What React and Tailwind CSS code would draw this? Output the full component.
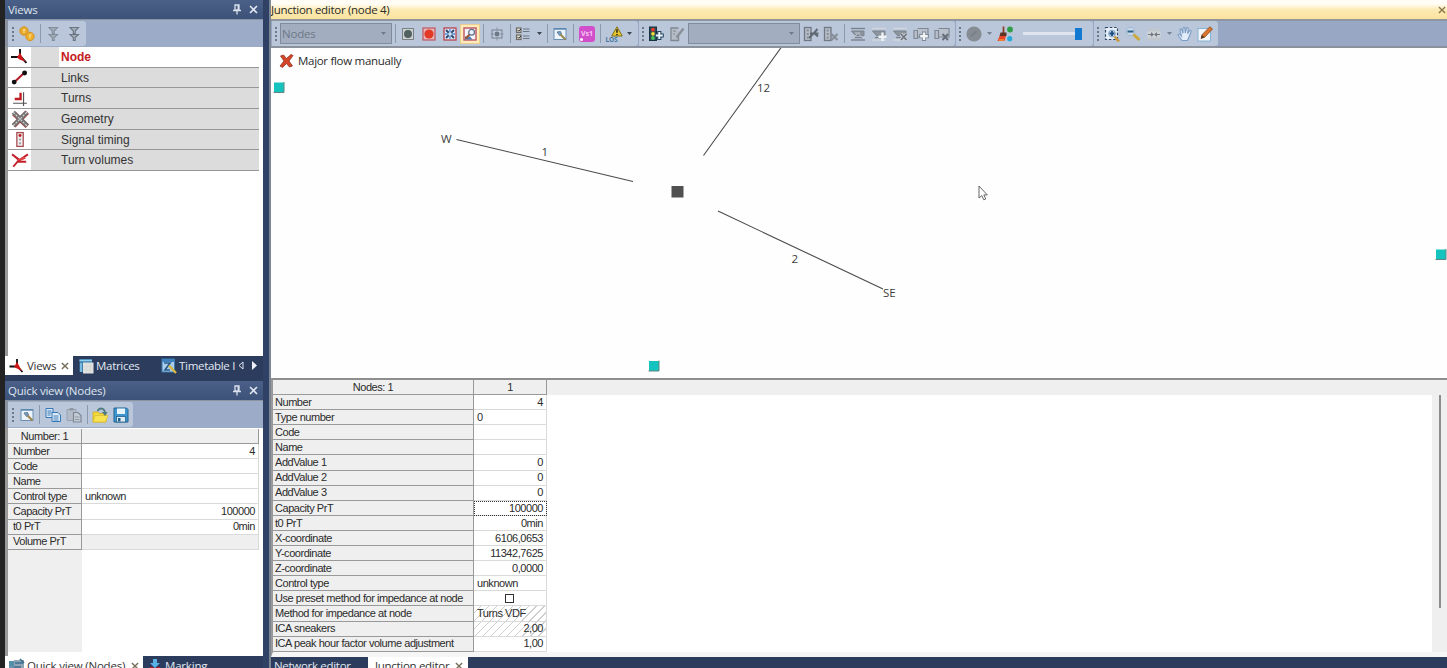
import clsx from 'clsx'

const VIEWS = [
  { label: 'Node', icon: NodeIcon, active: true },
  { label: 'Links', icon: LinkIcon },
  { label: 'Turns', icon: TurnIcon },
  { label: 'Geometry', icon: GeometryIcon },
  { label: 'Signal timing', icon: SignalIcon },
  { label: 'Turn volumes', icon: VolumeIcon },
]

const QUICK_ROWS = [
  { label: 'Number', value: '4' },
  { label: 'Code', value: '' },
  { label: 'Name', value: '' },
  { label: 'Control type', value: 'unknown', left: true },
  { label: 'Capacity PrT', value: '100000' },
  { label: 't0 PrT', value: '0min' },
  { label: 'Volume PrT', value: '', disabled: true },
]

const NODE_ROWS = [
  { label: 'Number', value: '4' },
  { label: 'Type number', value: '0', left: true },
  { label: 'Code', value: '' },
  { label: 'Name', value: '' },
  { label: 'AddValue 1', value: '0' },
  { label: 'AddValue 2', value: '0' },
  { label: 'AddValue 3', value: '0' },
  { label: 'Capacity PrT', value: '100000', focused: true },
  { label: 't0 PrT', value: '0min' },
  { label: 'X-coordinate', value: '6106,0653' },
  { label: 'Y-coordinate', value: '11342,7625' },
  { label: 'Z-coordinate', value: '0,0000' },
  { label: 'Control type', value: 'unknown', left: true },
  { label: 'Use preset method for impedance at node', checkbox: true },
  { label: 'Method for impedance at node', value: 'Turns VDF', left: true, hatched: true },
  { label: 'ICA sneakers', value: '2,00', hatched: true },
  { label: 'ICA peak hour factor volume adjustment', value: '1,00' },
]

function Svg({ size = 16, children, className }) {
  return (
    <svg width={size} height={size} viewBox="0 0 16 16" fill="none" className={clsx('shrink-0', className)}>
      {children}
    </svg>
  )
}

/* ---------- view list icons ---------- */

function NodeIcon() {
  return (
    <Svg size={17}>
      <path d="M0 8.500H9M8.500 1v7M9 8l5.500 6" stroke="#111" strokeWidth="1.8" />
      <path d="M8.500 4.500l3 5.500L14 13l-5.500-2-3-2z" fill="#d01818" />
    </Svg>
  )
}

function LinkIcon() {
  return (
    <Svg size={17}>
      <path d="M3 12.5L12.5 3.5" stroke="#b3202c" strokeWidth="2" />
      <circle cx="3" cy="12.3" r="2.3" fill="#111" />
      <circle cx="12.8" cy="3.8" r="2.3" fill="#111" />
    </Svg>
  )
}

function TurnIcon() {
  return (
    <Svg size={17}>
      <path d="M2 12.5h13M11.8 2v13" stroke="#555" strokeWidth="1.1" />
      <path d="M9 2.500v6H3.500" stroke="#c01c24" strokeWidth="2.2" />
    </Svg>
  )
}

function GeometryIcon() {
  return (
    <Svg size={18}>
      <path d="M2.5 3l12 11.500M14.500 2L2.500 14" stroke="#b04a4a" strokeWidth="4.4" />
      <path d="M2 2l12.5 12M14 2L2 14" stroke="#717171" strokeWidth="3.8" />
      <path d="M2 2l12 12M14 2L2 14" stroke="#d5d5d5" strokeWidth="1" strokeDasharray="2 1" />
    </Svg>
  )
}

function SignalIcon() {
  return (
    <Svg size={17}>
      <rect x="5.5" y="1.5" width="6" height="13" fill="#eee" stroke="#a84a50" strokeWidth="1.2" />
      <circle cx="8.5" cy="4.2" r="1.4" fill="#c01c24" />
      <circle cx="8.5" cy="8" r="1" fill="#999" />
      <circle cx="8.5" cy="11.6" r="1" fill="#999" />
    </Svg>
  )
}

function VolumeIcon() {
  return (
    <Svg size={18}>
      <path d="M1 3l6 5-5 6M1 3l6 4.500M7 8.500l8-5.500M5 9.500h8.500" stroke="#c4202b" strokeWidth="1.7" />
      <path d="M5 8l6-3 2.500 1.500-4 2z" fill="#d44" />
    </Svg>
  )
}

/* ---------- toolbar icons ---------- */

function CoinsIcon() {
  return (
    <Svg>
      <circle cx="5" cy="5" r="4.2" fill="#e9a92b" stroke="#d1942a" />
      <circle cx="11" cy="10.5" r="4.2" fill="#efae2c" stroke="#d1942a" />
      <path d="M4 4.500l2.500-1M10 9.500l2.500-1M5 3v4M11 8.500v4" stroke="#fbdc8a" strokeWidth="1.2" />
    </Svg>
  )
}

function FilterIcon({ dark }) {
  const stroke = dark ? '#6c7683' : '#848e9b'
  return (
    <Svg>
      <path d="M4 1.500h8.500L9.200 5v2.500H7.300V5z" fill="#a3adba" stroke={stroke} strokeWidth="1.1" />
      <path d="M4 8.500h8.500L9.200 11.500V14.500H7.300v-3z" fill="#a3adba" stroke={stroke} strokeWidth="1.1" />
    </Svg>
  )
}

function FramedNode({ color }) {
  return (
    <Svg>
      <rect x="2.5" y="2.5" width="11" height="11" fill="#c9d0cf" stroke="#7d8385" />
      <circle cx="8" cy="8" r="4" fill={color} />
    </Svg>
  )
}

function RedNode() {
  return (
    <Svg>
      <rect x="2" y="2" width="12" height="12" fill="#e5b5b8" stroke="#c05560" strokeWidth="1.2" />
      <circle cx="8" cy="8" r="4.6" fill="#e23a25" />
    </Svg>
  )
}

function CrossNode() {
  return (
    <Svg>
      <rect x="2" y="2" width="12" height="12" fill="#dfe8f6" stroke="#b8424f" strokeWidth="1.3" />
      <path d="M4 4l3 3M12 4L9 7M4 12l3-3M12 12L9 9" stroke="#2e4770" strokeWidth="1.9" />
      <path d="M8 3v3.500M8 9.500V13M3 8h3.500M9.500 8H13" stroke="#6fa2dd" strokeWidth="1.8" />
      <rect x="6.6" y="6.6" width="2.8" height="2.8" fill="#cfe1f6" />
    </Svg>
  )
}

function EditorNode() {
  return (
    <Svg>
      <rect x="2" y="2" width="12" height="12" fill="#f6f4f8" stroke="#bd5560" strokeWidth="1.4" />
      <path d="M3 10.500h5l2.500 3H3z" fill="#4b7cae" />
      <circle cx="9.600" cy="6.300" r="2.900" fill="#e9f1fb" stroke="#5b6f8e" strokeWidth="1.2" />
      <path d="M7.500 8.500L3.500 12.500" stroke="#a0522d" strokeWidth="1.8" />
    </Svg>
  )
}

function TargetIcon() {
  return (
    <Svg>
      <rect x="3" y="4" width="10" height="8" stroke="#78828f" />
      <path d="M8 1.500v13M1.500 8h13" stroke="#8a94a2" />
      <rect x="6" y="6" width="4" height="4" fill="#6f7886" />
    </Svg>
  )
}

function ListIcon() {
  return (
    <Svg>
      <rect x="1.5" y="2" width="4.5" height="4.5" fill="#e3ddd0" stroke="#6d6a68" strokeWidth="1.2" />
      <rect x="1.5" y="9" width="4.5" height="4.5" fill="#e3ddd0" stroke="#6d6a68" strokeWidth="1.2" />
      <path d="M2.500 4l1.200 1.200L6 3M2.500 11l1.200 1.200L6 10" stroke="#333" />
      <path d="M8 3h6.500M8 5.500h6.500M8 10h6.500M8 12.500h6.500" stroke="#6d7683" strokeWidth="1.1" />
    </Svg>
  )
}

function ZoomWindowIcon() {
  return (
    <Svg>
      <rect x="2" y="2.5" width="12" height="11" fill="#eef4fb" stroke="#6a8fb2" />
      <path d="M2 3h12" stroke="#5585b3" strokeWidth="1.4" />
      <path d="M5 6l3.500-.5 1 2.500-2 1.500z" fill="#7aa2c8" stroke="#4d6880" strokeWidth="0.800" />
      <path d="M8.500 8.500l5 5" stroke="#9c8a52" strokeWidth="2.2" />
    </Svg>
  )
}

function VissimBadge() {
  return (
    <div className="relative flex h-[16px] w-[16px] items-center justify-center rounded-[3px] bg-[#d24fcb]">
      <span className="text-[7px] leading-none font-bold text-[#f7c5f2]">Vs1</span>
      <span className="absolute bottom-[1px] left-[1px] h-[3px] w-[3px] rounded-full bg-white" />
    </div>
  )
}

function LosIcon() {
  return (
    <div className="relative flex h-[16px] w-[17px] items-end">
      <span className="text-[6.5px] leading-[5px] font-bold tracking-tight text-[#47779f]">LOS</span>
      <svg width="12" height="11" viewBox="0 0 12 11" className="absolute top-0 right-0">
        <path d="M6 0.8L11.300 10H0.700z" fill="#e8c72c" stroke="#7d701e" />
        <path d="M6 3.200v3.600M6 8v1.200" stroke="#222" strokeWidth="1.5" />
      </svg>
    </div>
  )
}

function SignalAddIcon() {
  return (
    <Svg>
      <rect x="1.5" y="1" width="7" height="13.5" fill="#2d4b55" stroke="#18333e" />
      <circle cx="5" cy="3.7" r="1.9" fill="#e43b2b" />
      <circle cx="5" cy="7.8" r="1.9" fill="#f2dc35" />
      <circle cx="5" cy="12" r="1.9" fill="#48c45a" />
      <path d="M11.300 5v9M6.800 9.500h9" stroke="#23435f" strokeWidth="4.200" />
      <path d="M11.300 6v7M7.800 9.500h7" stroke="#e9f5ff" strokeWidth="2" />
    </Svg>
  )
}

function SignalEditIcon() {
  return (
    <Svg>
      <path d="M9.500 2H2v12.500h7.500V9" fill="#b7bdc6" stroke="#7f8791" strokeWidth="1.3" />
      <path d="M4 5h3M4 8h2" stroke="#7f8791" />
      <path d="M14.500 2.500l-7 9" stroke="#8b9199" strokeWidth="2.6" />
    </Svg>
  )
}

function SignalGrayIcon({ cross }) {
  return (
    <Svg>
      <rect x="1.5" y="1.5" width="6.5" height="13" fill="#b6bdc7" stroke="#6f7884" strokeWidth="1.3" />
      <path d="M4.700 3.500v2M4.700 7v2M4.700 10.500v2" stroke="#858e99" strokeWidth="2" />
      {cross ? (
        <path d="M8.500 8l6 6M14.500 8l-6 6" stroke="#868d97" strokeWidth="2" />
      ) : (
        <path d="M6 12l6-6M7 7.500h8.500M14.500 3L11 7l4 3.500" stroke="#5f6873" strokeWidth="1.900" />
      )}
    </Svg>
  )
}

function LanesIcon({ variant }) {
  return (
    <Svg>
      <path d="M1 2.500h14" stroke={variant ? '#d2d6dc' : '#79828e'} strokeWidth="1.4" />
      <path d="M1 14h14" stroke={variant ? '#d2d6dc' : '#79828e'} strokeWidth="1.4" />
      <path d="M1.500 5h12.500v4.500H5.500z" fill="#8d949d" stroke="#79828e" />
      <path d="M4 11.500h9" stroke="#79828e" strokeWidth="1.5" />
      {variant === 'add' && <path d="M11.500 6.500v8.500M7.500 10.700h8" stroke="#f0f2f5" strokeWidth="2.400" />}
      {variant === 'remove' && (
        <>
          <path d="M9 8l5.500 6M14.500 8L9 14" stroke="#ccd1d8" strokeWidth="3.400" />
          <path d="M9 8l5.500 6M14.500 8L9 14" stroke="#6c747f" strokeWidth="1.700" />
        </>
      )}
      {!variant && <path d="M3 13l4-5M8.500 8l5.500 5M5 7h5" stroke="#c2c9d3" strokeWidth="1" />}
    </Svg>
  )
}

function CrosswalkIcon({ remove }) {
  return (
    <Svg>
      <path d="M1 4.500v8h3.500v-8zM4.500 2.500H15v8.500H4.500" fill="#b9c1cd" stroke="#7e8793" strokeWidth="1.2" />
      {remove ? (
        <path d="M8.500 8l5.500 6M14 8l-5.500 6" stroke="#666e79" strokeWidth="1.9" />
      ) : (
        <>
          <path d="M11 5.500v9.500M6.200 10.200h9.600" stroke="#7e8793" strokeWidth="4.200" />
          <path d="M11 6.500v7.500M7.200 10.200h7.600" stroke="#f1f3f6" strokeWidth="2.400" />
        </>
      )}
    </Svg>
  )
}

function GrayDot() {
  return (
    <Svg>
      <circle cx="8" cy="8" r="7.6" fill="#868c93" />
      <path d="M5 10.500l5.500-5.500" stroke="#798087" strokeWidth="2" />
    </Svg>
  )
}

function BrushIcon() {
  return (
    <Svg>
      <path d="M6.500 0.500v7" stroke="#8f4226" strokeWidth="1.800" />
      <path d="M3.500 6.500h6v3.500h-7z" fill="#5d3327" />
      <path d="M2.500 10h6.500l-1.500 5H0.500z" fill="#e9432a" />
      <path d="M2 14h5" stroke="#f7bd35" />
      <circle cx="13" cy="3.500" r="2.900" fill="#2f9c46" />
      <circle cx="12.700" cy="12.700" r="2.600" fill="#25a9d8" />
    </Svg>
  )
}

function ZoomRectIcon() {
  return (
    <Svg>
      <rect x="1.500" y="1.500" width="12" height="12" fill="#e6eef8" stroke="#2f4a66" strokeWidth="1.200" strokeDasharray="2.500 1.800" />
      <circle cx="8" cy="7.500" r="3.400" fill="#c4daf0" stroke="#85a4c4" />
      <path d="M8 5v5M5.500 7.500h5" stroke="#1d4b7c" strokeWidth="1.8" />
      <path d="M10.500 10.500l4.500 5" stroke="#c79a3f" strokeWidth="2.600" />
    </Svg>
  )
}

function ZoomOutIcon() {
  return (
    <Svg>
      <circle cx="5.500" cy="5.500" r="4.200" fill="#c5d8ec" stroke="#a1b7d0" />
      <path d="M2.500 5.500h6" stroke="#2b6287" strokeWidth="2" />
      <path d="M8.500 8.500l6 5.500" stroke="#cda83c" strokeWidth="3" />
    </Svg>
  )
}

function FitIcon() {
  return (
    <Svg>
      <path d="M2 2.500h12v12H2z" fill="#c2c7ce" />
      <path d="M1.500 5.500h13v6h-13z" fill="#d0d4d9" />
      <path d="M2 8.500h4.500M14 8.500H9.500M5 6.800l2 1.700-2 1.700M11 6.800L9 8.500l2 1.700" stroke="#6f7680" strokeWidth="1.200" />
    </Svg>
  )
}

function HandIcon() {
  return (
    <Svg>
      <path
        d="M5 14.5L1.2 9.3c-.6-1 .8-1.8 1.6-.9L4.5 10 3 4.3c-.2-1.3 1.4-1.6 1.8-.4L6 7.3V2.2c0-1.3 1.8-1.3 1.9 0L8.2 7l1.3-4.6c.4-1.2 2-.8 1.8.4l-.8 4.9 1.9-2.9c.8-1 2.100-.2 1.600.9L12 11l-1.500 3.500z"
        fill="#e3edf9"
        stroke="#7c9cc4"
        strokeWidth="1.1"
      />
    </Svg>
  )
}

function PencilIcon() {
  return (
    <Svg>
      <rect x="1" y="2.500" width="12.500" height="12.500" fill="#f3f7fb" stroke="#87b2d2" />
      <path d="M4 12.500l1-3.800L12.800 0.800l2.700 2.300L7.700 11.300z" fill="#d9752f" stroke="#8d4e22" strokeWidth="0.800" />
      <path d="M4 12.500l1-3.600 2.500 2.300z" fill="#4d3421" />
    </Svg>
  )
}

function CopyIcon({ muted }) {
  const stroke = muted ? '#939daa' : '#3477b5'
  const fill = muted ? '#bec6d0' : '#dceaf7'
  return (
    <Svg>
      <path d="M1 1.500h7v9H1z" fill={fill} stroke={stroke} />
      <path d="M2.500 4h4M2.500 6h4M2.500 8h3" stroke={stroke} />
      <path d="M7 5.500h6l2.500 2.500v6.500H7z" fill={fill} stroke={stroke} />
      <path d="M8.500 9h5M8.500 11h5M8.500 13h5" stroke={stroke} strokeWidth="0.9" />
    </Svg>
  )
}

function PasteIcon() {
  return (
    <Svg>
      <path d="M1 2.500h9v11H1z" fill="#b3bcc8" stroke="#98a2af" />
      <path d="M3.500 1h4v2.500h-4z" fill="#8d97a5" />
      <path d="M7.500 5.500h4.500l3 3v6.500H7.500z" fill="#c3cad3" stroke="#7d8794" strokeWidth="1.200" />
      <path d="M9 10h4.500M9 12.500h4.500" stroke="#929ba8" />
    </Svg>
  )
}

function OpenIcon() {
  return (
    <Svg>
      <path d="M1 5h5l1.500 1.500H14v8.500H1z" fill="#f2d83a" stroke="#d2b22b" />
      <path d="M1 15l2-6.500h13L13.500 15z" fill="#f7e352" stroke="#d9bb2e" strokeWidth="0.700" />
      <path d="M5.500 4c2-4 7-3 7.500 1.500" stroke="#4f7c80" strokeWidth="1.800" />
      <path d="M10 5h5.500L13 9z" fill="#4f7c80" />
    </Svg>
  )
}

function SaveIcon() {
  return (
    <Svg>
      <path d="M1 1h12.500L15 2.500V15H1z" fill="#3d96d0" stroke="#22628f" />
      <rect x="4" y="1.500" width="8" height="5.500" fill="#e8f4fc" />
      <rect x="3.500" y="9.500" width="9" height="5.500" fill="#dcebf4" stroke="#22628f" strokeWidth="0.800" />
      <rect x="5" y="11" width="2.500" height="3.500" fill="#22628f" />
    </Svg>
  )
}

function MatrixIcon() {
  return (
    <Svg>
      <rect x="0.500" y="1" width="12.500" height="13" fill="#3e7fae" />
      <path d="M0.500 2.500h12.500M2 5v9" stroke="#8fd0ef" strokeWidth="1.500" />
      <rect x="4" y="4.500" width="10.500" height="11" fill="#e2e2de" />
      <path d="M4 8.500h10.500M4 12h10.500M7.500 5v10M11 5v10" stroke="#d2d4d4" strokeWidth="0.600" />
    </Svg>
  )
}

function TimetableIcon() {
  return (
    <Svg>
      <rect x="1" y="1" width="12.500" height="13" fill="#a9cdea" stroke="#3d79ad" />
      <path d="M1 1h12.500v3H1z" fill="#3e82bd" />
      <path d="M3 5h6L4 12h5" stroke="#2b5c8c" strokeWidth="1.700" />
      <path d="M8 7.500l7 7.500" stroke="#d8b843" strokeWidth="2.400" />
    </Svg>
  )
}

function PinIcon() {
  return (
    <svg width="10" height="11" viewBox="0 0 10 11" fill="none">
      <path d="M3 1h4v5H3zM1 6.500h8M5 6.500V10.500M6.200 1v5" stroke="#d9e0ec" strokeWidth="1.3" />
    </svg>
  )
}

function CloseIcon({ color = '#dfe5f0', size = 9 }) {
  return (
    <svg width={size} height={size} viewBox="0 0 9 9" fill="none">
      <path d="M1 1l7 7M8 1L1 8" stroke={color} strokeWidth="1.600" />
    </svg>
  )
}

/* ---------- toolbar parts ---------- */

function Grip({ className }) {
  return (
    <div className={clsx('flex shrink-0 flex-col items-center gap-[2px]', className)}>
      {[0, 1, 2, 3].map((i) => (
        <span key={i} className="h-[2px] w-[2px] bg-[#6b7890]" />
      ))}
    </div>
  )
}

function Sep({ className }) {
  return (
    <div className={clsx('flex h-[19px] shrink-0 justify-center', className)}>
      <span className="w-px bg-[#8b99ae]" />
    </div>
  )
}

function Caret({ className, color = '#3c4553' }) {
  return (
    <div className={clsx('flex shrink-0 justify-center', className)}>
      <svg width="5" height="3" viewBox="0 0 5 3">
        <path d="M0 0h5L2.500 3z" fill={color} />
      </svg>
    </div>
  )
}

function Tool({ className, children }) {
  return <div className={clsx('flex h-5 shrink-0 items-center justify-center', className)}>{children}</div>
}

function Combo({ className, children }) {
  return (
    <div
      className={clsx(
        'flex h-[21px] shrink-0 items-center justify-between border border-[#7f8c9e] bg-[#a2aebf] pr-[5px] pl-[1px] text-[11.5px] tracking-[-0.2px] text-[#6d7888]',
        className,
      )}
    >
      <span>{children}</span>
      <Caret color="#6f7b8d" />
    </div>
  )
}

function Group({ className, children }) {
  return <div className={clsx('flex h-[25px] shrink-0 items-center rounded-r-[3px] bg-[#bac7da]', className)}>{children}</div>
}

function PanelHeader({ title }) {
  return (
    <div className="flex h-[19px] shrink-0 items-center bg-linear-to-b from-[#4b6088] to-[#3d5278] pr-[5px] pl-[3px] font-['Open_Sans'] text-[11.5px] tracking-[-0.25px] text-[#dfe5ee]">
      <span className="flex-1">{title}</span>
      <PinIcon />
      <span className="ml-[7px]">
        <CloseIcon />
      </span>
    </div>
  )
}

/* ---------- left column ---------- */

function ViewsPanel() {
  return (
    <section className="flex h-[356px] shrink-0 flex-col bg-white">
      <PanelHeader title="Views" />
      <div className="flex h-[28px] shrink-0 items-center border-t border-l-[3px] border-[#8b93a0] bg-[#9babc8]">
        <Group className="w-[78px]">
          <Grip className="w-[10px]" />
          <Tool className="w-[18px]"><CoinsIcon /></Tool>
          <Sep className="w-[9px]" />
          <Tool className="w-[16px]"><FilterIcon /></Tool>
          <Tool className="ml-[5px] w-[16px]"><FilterIcon dark /></Tool>
        </Group>
      </div>
      <div className="flex flex-1 flex-col border-l-[3px] border-[#999] pr-[4px]">
        {VIEWS.map(({ label, icon: Icon, active }) => (
          <div key={label} className="flex h-[20.7px] border-b border-[#969696]">
            <div className="flex w-[23px] items-center justify-center bg-white">
              <Icon />
            </div>
            <div
              className={clsx(
                'flex flex-1 items-center bg-[#dcdcdc] pl-[30px] font-["Liberation_Sans"] text-[12px]',
                active ? 'font-bold text-[#c41a22]' : 'text-[#333]',
              )}
            >
              <span className={clsx('-ml-[2px] flex h-full flex-1 items-center pl-[2px]', active && 'bg-white')}>
                {label}
              </span>
            </div>
          </div>
        ))}
      </div>
    </section>
  )
}

function ViewsTabs() {
  return (
    <div className="flex h-[25px] shrink-0 items-start bg-[#2b3c5d] text-[11.5px] tracking-[-0.3px] text-[#e3e8f0]">
      <div className="flex h-[19px] w-[68px] items-center bg-white pl-[4px] text-[#333]">
        <Svg size={16}>
          <path d="M0.500 8.500H8M8 1v7M8 8l5.500 6" stroke="#111" strokeWidth="1.8" />
          <path d="M8 4l5 9-8-4z" fill="#d01818" />
        </Svg>
        <span className="mr-[5px] ml-[2px]">Views</span>
        <CloseIcon color="#756f5c" size={8} />
      </div>
      <div className="flex h-[19px] w-[83px] items-center pl-[6px]">
        <MatrixIcon />
        <span className="ml-[1px]">Matrices</span>
      </div>
      <div className="flex h-[19px] flex-1 items-center pl-[5px]">
        <TimetableIcon />
        <span className="ml-[2px] whitespace-nowrap">Timetable I</span>
        <svg width="22" height="9" viewBox="0 0 22 9" className="ml-[2px]">
          <path d="M6 1v7L2 4.500z" fill="none" stroke="#dfe5f0" />
          <path d="M15 0v9l5-4.500z" fill="#eef2f8" />
        </svg>
      </div>
    </div>
  )
}

function QuickView() {
  return (
    <section className="flex h-[275px] shrink-0 flex-col bg-white">
      <PanelHeader title="Quick view (Nodes)" />
      <div className="flex h-[28px] shrink-0 items-center border-t border-l-[3px] border-[#8b93a0] bg-[#9babc8]">
        <Group className="w-[125px]">
          <Grip className="w-[10px]" />
          <Tool className="w-[17px]"><ZoomWindowIcon /></Tool>
          <Sep className="w-[8px]" />
          <Tool className="ml-[1px] w-[18px]"><CopyIcon /></Tool>
          <Tool className="ml-[3px] w-[18px]"><PasteIcon /></Tool>
          <Sep className="w-[8px]" />
          <Tool className="w-[18px]"><OpenIcon /></Tool>
          <Tool className="ml-[3px] w-[18px]"><SaveIcon /></Tool>
        </Group>
      </div>
      <div className="flex flex-1 border-l-[3px] border-[#999] pt-px pr-[4px] pb-[4px]">
        <div className="flex w-[74px] shrink-0 flex-col bg-[#efefef]">
          <div className="flex h-[15.1px] items-center justify-center border-r border-b border-[#999]">
            Number: 1
          </div>
          {QUICK_ROWS.map((row) => (
            <div key={row.label} className="flex h-[15.1px] items-center border-r border-b border-[#999] pl-[5px] whitespace-nowrap">
              {row.label}
            </div>
          ))}
        </div>
        <div className="flex flex-1 flex-col">
          <div className="h-[15.1px] border-r border-b border-[#999] bg-[#efefef]" />
          {QUICK_ROWS.map((row) => (
            <div
              key={row.label}
              className={clsx(
                'flex h-[15.1px] items-center border-r border-b border-[#d9d9d9] px-[3px]',
                !row.left && 'justify-end',
                row.disabled && 'bg-[#efefef]',
              )}
            >
              {row.value}
            </div>
          ))}
        </div>
      </div>
    </section>
  )
}

function BottomLeftTabs() {
  return (
    <div className="flex h-[12px] shrink-0 items-start overflow-hidden bg-[#2b3c5d] text-[11.5px] tracking-[-0.2px]">
      <div className="flex h-[19px] w-[138px] items-center bg-white pl-[4px] text-[#333]">
        <Svg>
          <path d="M0 3h5v5H0z" fill="#5590a8" />
          <path d="M5 2h10v10H5z" fill="#8fa5b4" />
          <path d="M6 5h8M11 1l4 4M0 9h12" stroke="#3d6f90" strokeWidth="1.6" />
        </Svg>
        <span className="ml-[2px] whitespace-nowrap">Quick view (Nodes)</span>
        <span className="ml-[6px]">
          <CloseIcon color="#756f5c" size={8} />
        </span>
      </div>
      <div className="flex h-[19px] items-center pl-[4px] text-[#e3e8f0]">
        <Svg>
          <path d="M6 1h4v4h3L8 10 3 5h3z" fill="#58b2e6" />
          <path d="M3 9h3l2 2 2-2h3v5H3z" fill="#b5202c" />
        </Svg>
        <span className="ml-[2px]">Marking</span>
      </div>
    </div>
  )
}

/* ---------- junction editor ---------- */

function EditorToolbar() {
  return (
    <div className="flex h-[29px] shrink-0 items-center border-t-2 border-b-2 border-t-[#8f969f] border-b-[#8c929b] bg-[#98a8c4] pl-[1px]">
      <Group className="w-[366px]">
        <Grip className="w-[8px]" />
        <Combo className="w-[112px]">Nodes</Combo>
        <Sep className="w-[6px]" />
        <Tool className="w-[20px]"><FramedNode color="#52605f" /></Tool>
        <Tool className="w-[21px]"><RedNode /></Tool>
        <Tool className="w-[21px]"><CrossNode /></Tool>
        <Tool className="w-[20px] border border-[#e9cf8b] bg-[#fdebbd]"><EditorNode /></Tool>
        <Sep className="w-[7px]" />
        <Tool className="w-[20px]"><TargetIcon /></Tool>
        <Sep className="w-[6px]" />
        <Tool className="w-[20px]"><ListIcon /></Tool>
        <Caret className="w-[12px]" />
        <Sep className="w-[5px]" />
        <Tool className="w-[20px]"><ZoomWindowIcon /></Tool>
        <Sep className="w-[7px]" />
        <Tool className="w-[20px]"><VissimBadge /></Tool>
        <Sep className="w-[7px]" />
        <Tool className="w-[20px]"><LosIcon /></Tool>
        <Caret className="w-[10px]" />
      </Group>
      <Group className="ml-px w-[316px]">
        <Grip className="w-[7px]" />
        <Tool className="w-[20px]"><SignalAddIcon /></Tool>
        <Tool className="w-[22px]"><SignalEditIcon /></Tool>
        <Combo className="w-[112px]" />
        <Tool className="w-[21px]"><SignalGrayIcon /></Tool>
        <Tool className="w-[20px]"><SignalGrayIcon cross /></Tool>
        <Sep className="w-[7px]" />
        <Tool className="w-[20px]"><LanesIcon /></Tool>
        <Tool className="w-[21px]"><LanesIcon variant="add" /></Tool>
        <Tool className="w-[21px]"><LanesIcon variant="remove" /></Tool>
        <Tool className="w-[21px]"><CrosswalkIcon /></Tool>
        <Tool className="w-[21px]"><CrosswalkIcon remove /></Tool>
      </Group>
      <Group className="ml-px w-[137px]">
        <Grip className="w-[8px]" />
        <Tool className="w-[20px]"><GrayDot /></Tool>
        <Caret className="w-[10px]" color="#76828f" />
        <Tool className="ml-px w-[20px]"><BrushIcon /></Tool>
        <div className="ml-[8px] flex h-5 items-center">
          <span className="h-[3px] w-[52px] bg-[#dfe4ed]" />
          <span className="h-[12px] w-[7px] bg-[#1179d2]" />
        </div>
      </Group>
      <Group className="ml-px w-[124px]">
        <Grip className="w-[8px]" />
        <Tool className="w-[20px]"><ZoomRectIcon /></Tool>
        <Tool className="w-[21px]"><ZoomOutIcon /></Tool>
        <Tool className="w-[21px]"><FitIcon /></Tool>
        <Caret className="w-[10px]" color="#76828f" />
        <Tool className="w-[21px]"><HandIcon /></Tool>
        <Tool className="w-[20px]"><PencilIcon /></Tool>
      </Group>
    </div>
  )
}

function Handle({ x, y }) {
  return (
    <g>
      <rect x={x} y={y} width="10" height="10" fill="#14c3bd" />
      <path d={`M${x - 0.5} ${y + 10}h10.500v-10.500`} fill="none" stroke="#5f8583" />
    </g>
  )
}

function JunctionCanvas() {
  return (
    <div className="relative h-[330px] shrink-0 bg-[#fefefe]">
      <div className="flex items-center pt-[4px] pl-[8px] text-[11.5px] tracking-[-0.3px] text-[#2b2b2b]">
        <svg width="15" height="14" viewBox="0 0 14 14">
          <path d="M1 2l3-1 3 3.500L11.500 0.500 13.500 1.500 9.500 7l3.500 5-3 1-3-3.500-4 4-2.500-1.500L4.500 7z" fill="#d4452a" stroke="#8f3522" strokeWidth="0.800" />
        </svg>
        <span className="ml-[4px]">Major flow manually</span>
      </div>
      <svg width="1176" height="329" className="absolute top-0 left-0">
        <g stroke="#4a4a4a" strokeWidth="1.1">
          <path d="M185.500 91.500L362 133.500M510.500 -1L432.500 107.500M447 163L612 241" fill="none" />
        </g>
        <rect x="400.500" y="138" width="12" height="11.500" fill="#505050" />
        <g fontSize="11.500" fill="#3c3c3c">
          <text x="170" y="94.500">W</text>
          <text x="270.500" y="107.500">1</text>
          <text x="486" y="43.500">12</text>
          <text x="520.500" y="214.500">2</text>
          <text x="612" y="248.500">SE</text>
        </g>
        <Handle x={3} y={34.5} />
        <Handle x={378} y={313} />
        <Handle x={1165} y={201.500} />
        <path d="M708 138v12l2.800-2.400 2 4.200 2-.9-2-4h3.500z" fill="#fff" stroke="#555" strokeWidth="0.9" />
      </svg>
    </div>
  )
}

function NodeValue({ row }) {
  return (
    <div
      className={clsx(
        'flex h-[15.1px] items-center border-r border-b border-[#dadada] px-[3px]',
        row.checkbox && 'justify-center',
        !row.left && !row.checkbox && 'justify-end',
        row.hatched && 'bg-[repeating-linear-gradient(135deg,#fff_0px,#fff_4.600px,#cfcfcf_4.600px,#cfcfcf_5.600px)]',
        row.focused && 'outline outline-1 -outline-offset-1 outline-dotted outline-[#333]',
      )}
    >
      {row.checkbox ? <span className="-ml-[2px] h-[9px] w-[9px] border border-[#333] bg-white" /> : row.value}
    </div>
  )
}

function NodeTable() {
  return (
    <div className="flex h-[279px] shrink-0 border-t-2 border-b-[5px] border-l-2 border-t-[#8e8e8e] border-b-[#f6f6f6] border-l-[#999] bg-white">
      <div className="flex w-[201px] shrink-0 flex-col bg-[#efefef]">
        <div className="flex h-[15.1px] items-center justify-center border-r border-b border-[#999]">Nodes: 1</div>
        {NODE_ROWS.map((row) => (
          <div key={row.label} className="flex h-[15.1px] items-center border-r border-b border-[#999] pl-[2px] whitespace-nowrap">
            {row.label}
          </div>
        ))}
      </div>
      <div className="flex w-[73px] shrink-0 flex-col">
        <div className="flex h-[15.1px] items-center justify-center border-r border-b border-[#999] bg-[#efefef]">1</div>
        {NODE_ROWS.map((row) => (
          <NodeValue key={row.label} row={row} />
        ))}
      </div>
      <div className="flex-1">
        <div className="h-[15px] bg-[#efefef]" />
      </div>
      <div className="w-[15px] shrink-0 bg-[#efefef] pt-[15px] pl-[7px]">
        <div className="h-[213px] w-[2px] bg-[#8c8c8c]" />
      </div>
    </div>
  )
}

function EditorTabs() {
  return (
    <div className="flex h-[11px] shrink-0 items-start overflow-hidden bg-[#2b3c5d] text-[11.5px] tracking-[-0.3px] text-[#e3e8f0]">
      <div className="flex h-[18px] w-[97px] items-center pl-[3px] whitespace-nowrap">Network editor</div>
      <div className="flex h-[18px] w-[100px] items-center bg-white pl-[7px] whitespace-nowrap text-[#333]">
        Junction editor
        <span className="ml-[6px]">
          <CloseIcon color="#756f5c" size={8} />
        </span>
      </div>
    </div>
  )
}

export default function App() {
  return (
    <div className="flex h-[668px] w-[1447px] overflow-hidden bg-[#2b3c5d] font-['Open_Sans',sans-serif]">
      <div className="w-[5px] shrink-0 bg-[#232323]" />
      <aside className="flex w-[258px] shrink-0 flex-col text-[#2b2b2b]">
        <ViewsPanel />
        <ViewsTabs />
        <div className="font-['Liberation_Sans'] text-[11px] tracking-[-0.45px]">
          <QuickView />
        </div>
        <BottomLeftTabs />
      </aside>
      <div className="w-[8px] shrink-0 border-r-2 border-[#7c8594] bg-[#2f4265]" />
      <main className="flex flex-1 flex-col overflow-hidden text-[#2b2b2b]">
        <div className="flex h-[19px] shrink-0 items-center justify-between bg-linear-to-b from-[#fffdf6] from-20% via-[#fdebb5] via-50% to-[#fbe29d] pr-[1px] text-[11.5px] tracking-[-0.3px]">
          <span>Junction editor (node 4)</span>
          <CloseIcon color="#8b7a4c" size={8} />
        </div>
        <EditorToolbar />
        <JunctionCanvas />
        <div className="font-['Liberation_Sans'] text-[11px] tracking-[-0.45px]">
          <NodeTable />
        </div>
        <EditorTabs />
      </main>
    </div>
  )
}
